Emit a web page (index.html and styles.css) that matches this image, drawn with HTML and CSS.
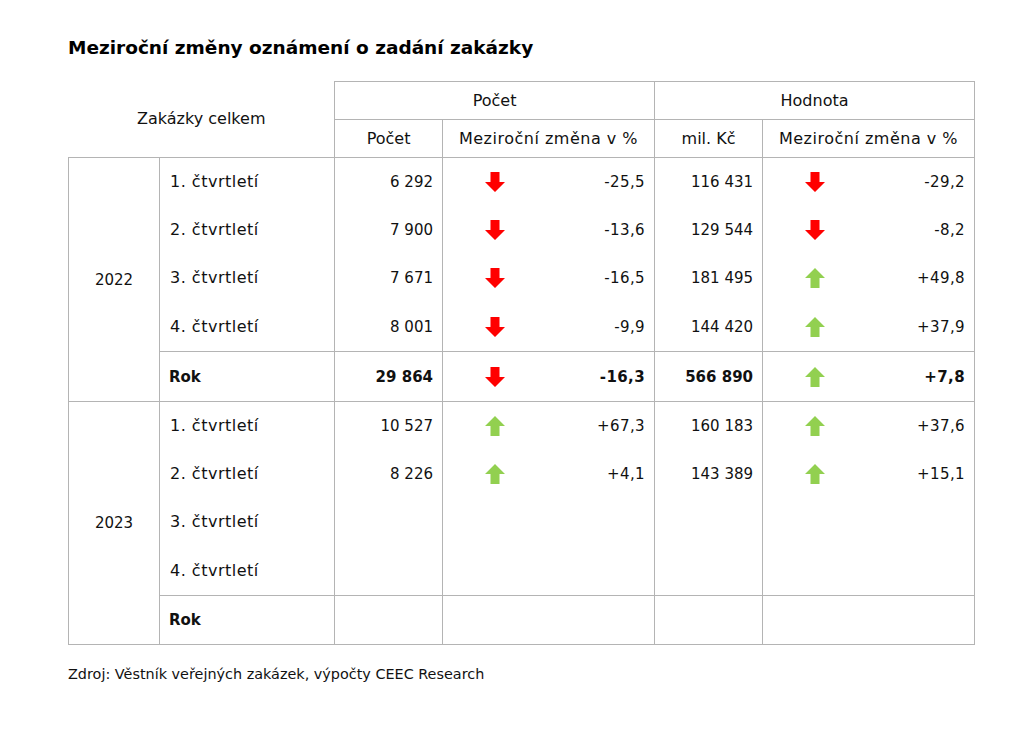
FILE: index.html
```html
<!DOCTYPE html>
<html lang="cs">
<head>
<meta charset="utf-8">
<title>Meziroční změny oznámení o zadání zakázky</title>
<link rel="stylesheet" href="styles.css">
</head>
<body>
<div class="page">
  <h1 class="title">Meziroční změny oznámení o zadání zakázky</h1>
  <table class="tbl">
    <colgroup>
      <col class="c-year"><col class="c-q"><col class="c-num"><col class="c-chg"><col class="c-num"><col class="c-chg">
    </colgroup>
    <thead>
      <tr class="h1">
        <th class="corner" colspan="2" rowspan="2">Zakázky celkem</th>
        <th colspan="2">Počet</th>
        <th colspan="2">Hodnota</th>
      </tr>
      <tr class="h2">
        <th>Počet</th>
        <th class="wide">Meziroční změna v %</th>
        <th>mil. Kč</th>
        <th class="wide">Meziroční změna v %</th>
      </tr>
    </thead>
    <tbody class="yr">
      <tr class="r">
        <td class="year" rowspan="5">2022</td>
        <td class="q">1. čtvrtletí</td>
        <td class="num">6 292</td>
        <td class="chg"><div class="chg-in"><svg class="arr" viewBox="0 0 20 20"><polygon class="down" points="5.5,0 14.5,0 14.5,10 20,10 10,20 0,10 5.5,10"/></svg><span>-25,5</span></div></td>
        <td class="num">116 431</td>
        <td class="chg"><div class="chg-in"><svg class="arr" viewBox="0 0 20 20"><polygon class="down" points="5.5,0 14.5,0 14.5,10 20,10 10,20 0,10 5.5,10"/></svg><span>-29,2</span></div></td>
      </tr>
      <tr class="r">
        <td class="q">2. čtvrtletí</td>
        <td class="num">7 900</td>
        <td class="chg"><div class="chg-in"><svg class="arr" viewBox="0 0 20 20"><polygon class="down" points="5.5,0 14.5,0 14.5,10 20,10 10,20 0,10 5.5,10"/></svg><span>-13,6</span></div></td>
        <td class="num">129 544</td>
        <td class="chg"><div class="chg-in"><svg class="arr" viewBox="0 0 20 20"><polygon class="down" points="5.5,0 14.5,0 14.5,10 20,10 10,20 0,10 5.5,10"/></svg><span>-8,2</span></div></td>
      </tr>
      <tr class="r">
        <td class="q">3. čtvrtletí</td>
        <td class="num">7 671</td>
        <td class="chg"><div class="chg-in"><svg class="arr" viewBox="0 0 20 20"><polygon class="down" points="5.5,0 14.5,0 14.5,10 20,10 10,20 0,10 5.5,10"/></svg><span>-16,5</span></div></td>
        <td class="num">181 495</td>
        <td class="chg"><div class="chg-in"><svg class="arr" viewBox="0 0 20 20"><polygon class="up" points="5.5,20 14.5,20 14.5,10 20,10 10,0 0,10 5.5,10"/></svg><span>+49,8</span></div></td>
      </tr>
      <tr class="r r-last">
        <td class="q">4. čtvrtletí</td>
        <td class="num">8 001</td>
        <td class="chg"><div class="chg-in"><svg class="arr" viewBox="0 0 20 20"><polygon class="down" points="5.5,0 14.5,0 14.5,10 20,10 10,20 0,10 5.5,10"/></svg><span>-9,9</span></div></td>
        <td class="num">144 420</td>
        <td class="chg"><div class="chg-in"><svg class="arr" viewBox="0 0 20 20"><polygon class="up" points="5.5,20 14.5,20 14.5,10 20,10 10,0 0,10 5.5,10"/></svg><span>+37,9</span></div></td>
      </tr>
      <tr class="rok">
        <td class="q rk">Rok</td>
        <td class="num">29 864</td>
        <td class="chg"><div class="chg-in"><svg class="arr" viewBox="0 0 20 20"><polygon class="down" points="5.5,0 14.5,0 14.5,10 20,10 10,20 0,10 5.5,10"/></svg><span>-16,3</span></div></td>
        <td class="num">566 890</td>
        <td class="chg"><div class="chg-in"><svg class="arr" viewBox="0 0 20 20"><polygon class="up" points="5.5,20 14.5,20 14.5,10 20,10 10,0 0,10 5.5,10"/></svg><span>+7,8</span></div></td>
      </tr>
    </tbody>
    <tbody class="yr">
      <tr class="r">
        <td class="year" rowspan="5">2023</td>
        <td class="q">1. čtvrtletí</td>
        <td class="num">10 527</td>
        <td class="chg"><div class="chg-in"><svg class="arr" viewBox="0 0 20 20"><polygon class="up" points="5.5,20 14.5,20 14.5,10 20,10 10,0 0,10 5.5,10"/></svg><span>+67,3</span></div></td>
        <td class="num">160 183</td>
        <td class="chg"><div class="chg-in"><svg class="arr" viewBox="0 0 20 20"><polygon class="up" points="5.5,20 14.5,20 14.5,10 20,10 10,0 0,10 5.5,10"/></svg><span>+37,6</span></div></td>
      </tr>
      <tr class="r">
        <td class="q">2. čtvrtletí</td>
        <td class="num">8 226</td>
        <td class="chg"><div class="chg-in"><svg class="arr" viewBox="0 0 20 20"><polygon class="up" points="5.5,20 14.5,20 14.5,10 20,10 10,0 0,10 5.5,10"/></svg><span>+4,1</span></div></td>
        <td class="num">143 389</td>
        <td class="chg"><div class="chg-in"><svg class="arr" viewBox="0 0 20 20"><polygon class="up" points="5.5,20 14.5,20 14.5,10 20,10 10,0 0,10 5.5,10"/></svg><span>+15,1</span></div></td>
      </tr>
      <tr class="r">
        <td class="q">3. čtvrtletí</td>
        <td class="num"></td>
        <td class="chg"></td>
        <td class="num"></td>
        <td class="chg"></td>
      </tr>
      <tr class="r r-last">
        <td class="q">4. čtvrtletí</td>
        <td class="num"></td>
        <td class="chg"></td>
        <td class="num"></td>
        <td class="chg"></td>
      </tr>
      <tr class="rok rok2">
        <td class="q rk">Rok</td>
        <td class="num"></td>
        <td class="chg"></td>
        <td class="num"></td>
        <td class="chg"></td>
      </tr>
    </tbody>
  </table>
  <p class="source">Zdroj: Věstník veřejných zakázek, výpočty CEEC Research</p>
</div>
</body>
</html>
```

FILE: styles.css
```css
html, body {
  margin: 0;
  padding: 0;
  background: #ffffff;
}
body {
  font-family: "DejaVu Sans", Verdana, sans-serif;
  color: #111111;
  font-size: 15px;
}
.page {
  padding: 36px 0 0 68px;
}
.title {
  margin: 0 0 21px 0;
  font-size: 18.5px;
  font-weight: bold;
  line-height: 24px;
  color: #000000;
}
.tbl {
  border-collapse: collapse;
  table-layout: fixed;
  width: 907px;
}
.c-year { width: 91px; }
.c-q { width: 175px; }
.c-num { width: 108px; }
.c-chg { width: 212px; }
.tbl th, .tbl td {
  border: 1px solid #b4b4b4;
  padding: 0;
  font-weight: normal;
  line-height: 18px;
}
.tbl th {
  text-align: center;
  height: 37px;
  font-size: 16px;
}
.tbl th.wide {
  letter-spacing: 0.5px;
}
.tbl th.corner {
  border-top: none;
  border-left: none;
}
.tbl td {
  border-top: none;
  border-bottom: none;
}
.r td { height: 48px; }
.r-last td { height: 49px; }
.rok td {
  height: 49px;
  border-top: 1px solid #b4b4b4;
  border-bottom: 1px solid #b4b4b4;
  font-weight: bold;
}
.rok2 td { height: 48px; }
.tbl td.year {
  text-align: center;
  border-bottom: 1px solid #b4b4b4;
  border-top: 1px solid #b4b4b4;
  font-weight: normal;
}
.q {
  padding-left: 10px !important;
  font-size: 16px;
  letter-spacing: 0.5px;
}
.q.rk {
  font-size: 15px;
  letter-spacing: 0;
  padding-left: 9px !important;
}
.num {
  text-align: right;
  padding-right: 9px !important;
}
.chg-in {
  display: flex;
  align-items: center;
  justify-content: space-between;
  padding: 0 9px 0 42px;
}
.chg-in span {
  letter-spacing: 0.4px;
}
.arr {
  width: 20px;
  height: 20px;
  display: block;
}
.down { fill: #ff0000; }
.up { fill: #92d050; }
.source {
  margin: 20px 0 0 0;
  font-size: 14.4px;
  line-height: 18px;
}
```
